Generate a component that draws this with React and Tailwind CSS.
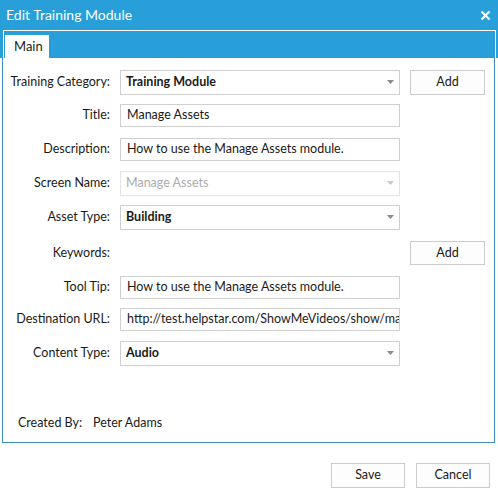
import React from "react";

const font = { fontFamily: 'Lato, "Noto Sans", sans-serif' };

const Arrow = ({ disabled }) => (
  <svg width="7" height="4" viewBox="0 0 7 4" className="shrink-0">
    <path d="M0 0 L7 0 L3.5 4 Z" fill={disabled ? "#c9c9c9" : "#8a8a8a"} />
  </svg>
);

const Select = ({ value, disabled }) => (
  <div
    className={`w-[280px] h-[25px] border flex items-center justify-between pl-[5px] pr-[5px] ${
      disabled ? "border-[#e3e3e3] text-[#ababab]" : "border-[#cfcfcf] text-[#1a1a1a] font-bold"
    }`}
  >
    <span>{value}</span>
    <Arrow disabled={disabled} />
  </div>
);

const Input = ({ value }) => (
  <div className="w-[280px] h-[23px] border border-[#cfcfcf] flex items-center pl-[6px] text-[#1a1a1a] overflow-hidden whitespace-nowrap">
    {value}
  </div>
);

const Button = ({ label, w = "w-[75px]", h = "h-[25px]" }) => (
  <button
    type="button"
    className={`${w} ${h} border border-[#cccccc] bg-[#fdfdfd] text-[#1a1a1a] flex items-center justify-center`}
  >
    {label}
  </button>
);

const rows = [
  { label: "Training Category:", field: <Select value="Training Module" />, add: true, h: "h-[34px]" },
  { label: "Title:", field: <Input value="Manage Assets" />, h: "h-[33px]" },
  { label: "Description:", field: <Input value="How to use the Manage Assets module." />, h: "h-[34px]" },
  { label: "Screen Name:", field: <Select value="Manage Assets" disabled />, h: "h-[34px]" },
  { label: "Asset Type:", field: <Select value="Building" />, h: "h-[34px]" },
  { label: "Keywords:", field: null, add: true, h: "h-[38px]" },
  { label: "Tool Tip:", field: <Input value="How to use the Manage Assets module." />, h: "h-[30px]" },
  { label: "Destination URL:", field: <Input value="http://test.helpstar.com/ShowMeVideos/show/manage-assets" />, h: "h-[34px]" },
  { label: "Content Type:", field: <Select value="Audio" />, h: "h-[34px]" },
];

export default function App() {
  return (
    <div className="w-[498px] h-[495px] bg-white flex flex-col text-[12.5px] text-[#1a1a1a]" style={font}>
      {/* header */}
      <div className="bg-[#289fd9]">
        <div className="h-[30px] flex items-center justify-between pl-[6px] pr-[7px]">
          <span className="text-white text-[14px] leading-none">Edit Training Module</span>
          <svg width="11" height="11" viewBox="0 0 11 11">
            <path d="M1.5 1.5 L9.5 9.5 M9.5 1.5 L1.5 9.5" stroke="#fff" strokeWidth="2.2" />
          </svg>
        </div>
        <div className="ml-[3px] w-[493px] h-[28px] border-t border-x border-white flex items-end pl-[1px]">
          <div className="w-[44px] h-[23px] bg-white flex items-center pl-[9px] text-[13px]">Main</div>
        </div>
      </div>

      {/* panel */}
      <div className="ml-[2px] w-[493px] h-[385px] border border-t-0 border-[#3d8ec1] flex flex-col pt-[7px] pb-[9px]">
        {rows.map((r) => (
          <div key={r.label} className={`${r.h} flex items-center`}>
            <div className="w-[107px] text-right">{r.label}</div>
            <div className="w-[280px] ml-[10px]">{r.field}</div>
            {r.add && (
              <div className="ml-[10px]">
                <Button label="Add" h={r.field ? "h-[25px]" : "h-[24px]"} />
              </div>
            )}
          </div>
        ))}
        <div className="flex-1" />
        <div className="flex items-center pl-[15px]">
          <span className="w-[75px]">Created By:</span>
          <span>Peter Adams</span>
        </div>
      </div>

      {/* footer */}
      <div className="flex justify-end gap-[11px] pr-[8px] mt-[20px]">
        <Button label="Save" w="w-[74px]" h="h-[25px]" />
        <Button label="Cancel" w="w-[74px]" h="h-[25px]" />
      </div>
    </div>
  );
}
